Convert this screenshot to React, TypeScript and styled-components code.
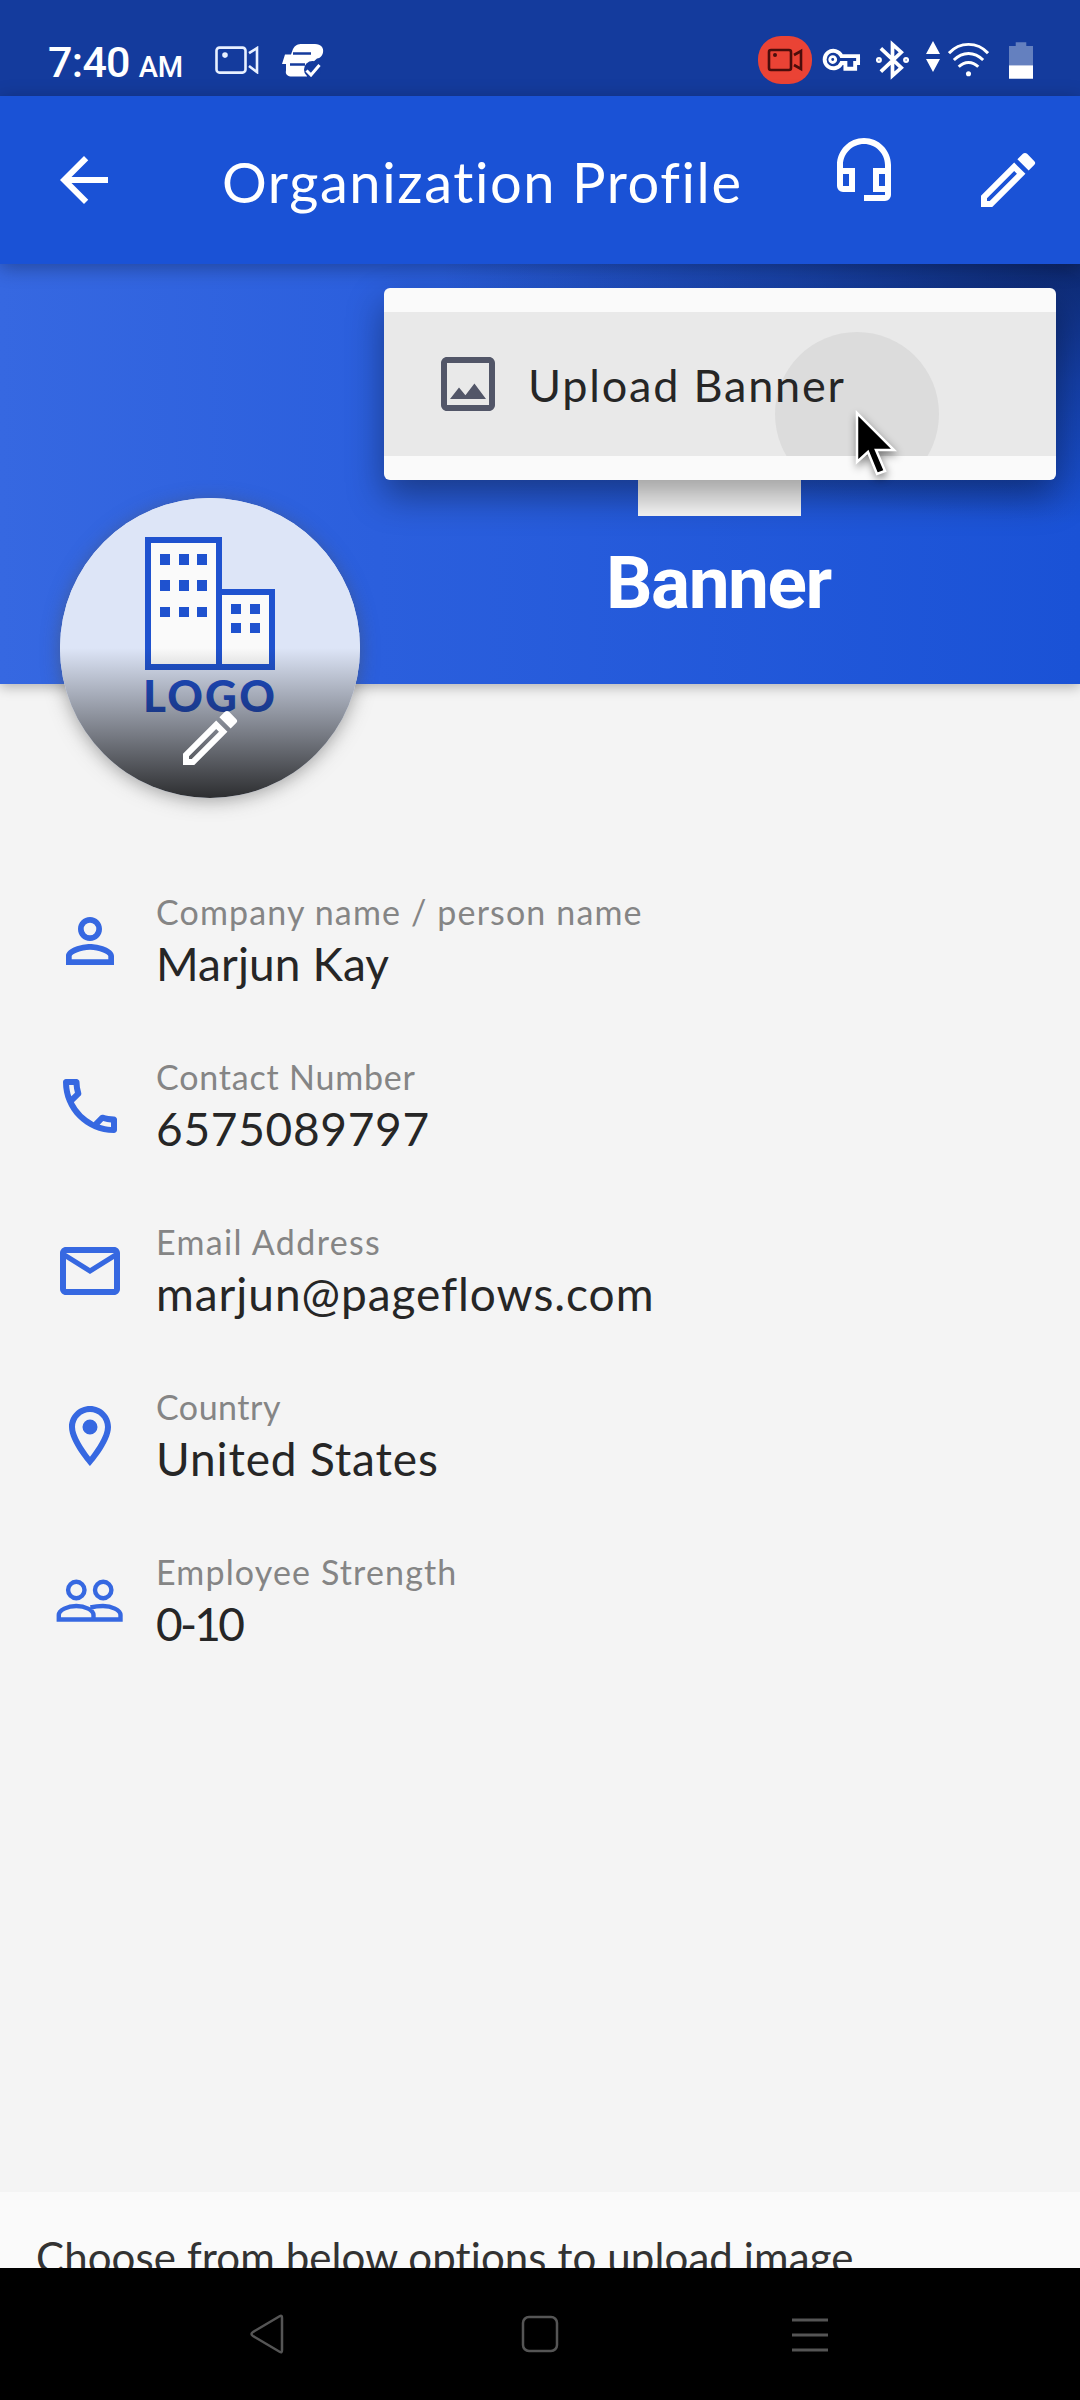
import React from "react";
import styled, { createGlobalStyle } from "styled-components";

const Global = createGlobalStyle`
  body { margin: 0; background: #f4f4f4; }
  * { box-sizing: border-box; }
`;

const Screen = styled.main`
  width: 1080px;
  height: 2400px;
  display: flex;
  flex-direction: column;
  overflow: hidden;
  background: #f4f4f4;
  font-family: Lato, "Open Sans", sans-serif;
`;

const StatusBar = styled.header`
  height: 96px;
  flex: none;
  display: flex;
  justify-content: space-between;
  padding: 24px 47px 0 48px;
  background: #143b9d;
  color: #fff;
`;

const StatusGroup = styled.div`
  height: 72px;
  display: flex;
  align-items: center;
`;

const Clock = styled.div`
  width: 166px;
  height: 72px;
  font: 500 43px/76px Roboto, sans-serif;
  letter-spacing: -0.7px;
  white-space: nowrap;
  small { font-size: 29px; margin-left: 9px; letter-spacing: -0.3px; }
`;

const Glyph = styled.svg<{ $gap?: number }>`
  display: block;
  flex: none;
  margin-left: ${(p) => p.$gap ?? 0}px;
`;

const AppBar = styled.nav`
  position: relative;
  z-index: 2;
  height: 168px;
  flex: none;
  display: flex;
  padding: 48px 36px 0 48px;
  background: #1a52d6;
  color: #fff;
  box-shadow: 0 4px 18px rgba(0, 0, 0, 0.3);
`;

const Title = styled.h1`
  width: 604px;
  margin: 0;
  padding-left: 102px;
  font-size: 56px;
  line-height: 72px;
  padding-top: 2px;
  font-weight: 400;
  letter-spacing: 1.6px;
  white-space: nowrap;
`;

const Support = styled.div`
  margin: -9px 72px 0 104px;
`;

const Banner = styled.section`
  position: relative;
  height: 420px;
  flex: none;
  background:
    radial-gradient(ellipse 640px 260px at 100% 0, rgba(6, 16, 50, 0.62), rgba(6, 16, 50, 0.3) 45%, rgba(6, 16, 50, 0)),
    linear-gradient(90deg, #3668e1 0%, #2b5fdd 35%, #1a52d6 100%);
  box-shadow: 0 3px 12px rgba(0, 0, 0, 0.28);
`;

const BannerMark = styled.div`
  width: 163px;
  height: 163px;
  margin: 89px 0 0 638px;
  background: #fafafa;
  position: absolute;
`;

const BannerName = styled.strong`
  position: absolute;
  left: 606px;
  top: 275px;
  color: #fff;
  font: 700 73px/88px Roboto, sans-serif;
  letter-spacing: -1.5px;
`;

const Menu = styled.div`
  position: absolute;
  z-index: 3;
  left: 384px;
  top: 24px;
  width: 672px;
  height: 192px;
  padding: 24px 0;
  border-radius: 6px;
  background: #fafafa;
  box-shadow: 0 16px 36px rgba(0, 0, 0, 0.38);
`;

const MenuItem = styled.div`
  position: relative;
  height: 144px;
  padding-left: 48px;
  display: flex;
  align-items: center;
  overflow: hidden;
  background: #e9e9e9;
  color: #525668;
`;

const Ripple = styled.i`
  position: absolute;
  left: 391px;
  top: 20px;
  width: 164px;
  height: 164px;
  border-radius: 50%;
  background: #dcdcdc;
`;

const MenuText = styled.span`
  position: relative;
  margin-left: 24px;
  font-size: 45px;
  line-height: 60px;
  padding-top: 1px;
  letter-spacing: 1.8px;
  color: #262626;
`;

const Pointer = styled.svg`
  position: absolute;
  z-index: 4;
  left: 463px;
  top: 117px;
  filter: drop-shadow(1px 4px 4px rgba(0, 0, 0, 0.45));
`;

const Avatar = styled.div`
  position: absolute;
  left: 60px;
  top: 234px;
  width: 300px;
  height: 300px;
  border-radius: 50%;
  overflow: hidden;
  background: #dde5f7;
`;

const AvatarShadow = styled(Avatar)`
  overflow: visible;
  box-shadow: 0 3px 18px rgba(80, 80, 80, 0.5);
`;

const Scrim = styled.div`
  position: absolute;
  inset: 150px 0 0;
  background: linear-gradient(180deg, rgba(0, 0, 0, 0), rgba(20, 20, 20, 0.88));
`;

const LogoWord = styled.b`
  position: absolute;
  left: 83px;
  top: 171px;
  font-size: 44px;
  line-height: 52px;
  font-weight: 900;
  letter-spacing: 2.2px;
  color: #1d4fd0;
`;

const AvatarEdit = styled.div`
  position: absolute;
  left: 114px;
  top: 204px;
  color: #fff;
`;

const Details = styled.dl`
  flex: 1;
  margin: 0;
  padding: 202px 54px 0;
`;

const Row = styled.div`
  height: 165px;
  display: flex;
`;

const RowIcon = styled.div`
  width: 102px;
  padding-top: 19px;
  color: #3668e1;
`;

const Label = styled.dt<{ $track: number }>`
  padding-top: 4px;
  font-size: 34px;
  line-height: 44px;
  color: #858585;
  letter-spacing: ${(p) => p.$track}px;
`;

const Value = styled.dd<{ $track: number }>`
  margin: 0;
  padding-top: 1px;
  font-size: 46px;
  line-height: 58px;
  color: #262626;
  letter-spacing: ${(p) => p.$track}px;
`;

const Sheet = styled.section`
  height: 76px;
  flex: none;
  padding: 35px 0 0 36px;
  overflow: hidden;
  background: #fafafa;
  color: #333;
  font-size: 42px;
  line-height: 60px;
  letter-spacing: 0.1px;
  font-variant-ligatures: none;
  white-space: nowrap;
`;

const NavBar = styled.footer`
  height: 132px;
  flex: none;
  display: grid;
  grid-template-columns: repeat(3, 270px);
  justify-content: center;
  justify-items: center;
  padding-top: 42px;
  background: #000;
`;

const Icon = ({ d, size = 72 }: { d: string; size?: number }) => (
  <Glyph width={size} height={size} viewBox="0 0 24 24" fill="currentColor">
    <path fillRule="evenodd" d={d} />
  </Glyph>
);

const paths = {
  back: "M20 11H7.83l5.59-5.59L12 4l-8 8 8 8 1.41-1.41L7.83 13H20v-2z",
  headset:
    "M12 1C7.03 1 3 5.03 3 10v7a2 2 0 0 0 2 2h4v-8H5v-1c0-3.87 3.13-7 7-7s7 3.13 7 7v1h-4v8h4v1h-7v2h7a2 2 0 0 0 2-2V10c0-4.97-4.03-9-9-9zM7 13v4H5v-4h2zm12 4h-2v-4h2v4z",
  edit: "M14.06 9.02l.92.92L5.92 19H5v-.92l9.06-9.06M17.66 3c-.25 0-.51.1-.7.29l-1.83 1.83 3.75 3.75 1.83-1.83a.996.996 0 0 0 0-1.41l-2.34-2.34c-.2-.2-.45-.29-.71-.29zm-3.6 3.19L3 17.25V21h3.75L17.81 9.94l-3.75-3.75z",
  image:
    "M19 5v14H5V5h14m0-2H5c-1.1 0-2 .9-2 2v14c0 1.1.9 2 2 2h14c1.1 0 2-.9 2-2V5c0-1.1-.9-2-2-2zM14.14 11.86l-3 3.87L9 13.14 6 17h12l-3.86-5.14z",
  person:
    "M12 5.9a2.1 2.1 0 1 1 0 4.2 2.1 2.1 0 0 1 0-4.2m0 9c2.97 0 6.1 1.46 6.1 2.1v1.1H5.9V17c0-.64 3.13-2.1 6.1-2.1M12 4C9.79 4 8 5.79 8 8s1.79 4 4 4 4-1.79 4-4-1.79-4-4-4zm0 9c-2.67 0-8 1.34-8 4v3h16v-3c0-2.66-5.33-4-8-4z",
  phone:
    "M6.54 5c.06.89.21 1.76.45 2.59l-1.2 1.2c-.41-1.2-.67-2.47-.76-3.79h1.51m9.86 12.02c.85.24 1.72.39 2.6.45v1.49c-1.32-.09-2.59-.35-3.8-.75l1.2-1.19M7.5 3H4c-.55 0-1 .45-1 1 0 9.39 7.61 17 17 17 .55 0 1-.45 1-1v-3.49c0-.55-.45-1-1-1-1.24 0-2.45-.2-3.57-.57a1.02 1.02 0 0 0-1.02.24l-2.2 2.2a15.045 15.045 0 0 1-6.59-6.59l2.2-2.2c.28-.28.36-.67.25-1.02A11.36 11.36 0 0 1 8.5 4c0-.55-.45-1-1-1z",
  mail: "M4 4C2.9 4 2 4.9 2 6v12c0 1.1.9 2 2 2h16c1.1 0 2-.9 2-2V6c0-1.1-.9-2-2-2H4zm16 14H4V8l8 5 8-5v10zm-8-7L4 6h16l-8 5z",
  pin: "M12 2C8.13 2 5 5.13 5 9c0 5.25 7 13 7 13s7-7.75 7-13c0-3.87-3.13-7-7-7zM7 9c0-2.76 2.24-5 5-5s5 2.24 5 5c0 2.88-2.88 7.19-5 9.88C9.92 16.21 7 11.85 7 9zm5-2.5a2.5 2.5 0 1 0 0 5 2.5 2.5 0 0 0 0-5z",
};

const PeopleIcon = () => (
  <Glyph width="72" height="72" viewBox="0 0 72 72" fill="none" stroke="currentColor" strokeWidth="4.4">
    <circle cx="22.3" cy="25" r="8.2" />
    <circle cx="49.2" cy="25" r="8.2" />
    <path d="M4.8 54.5v-4.5c0-5 9-9 17.5-9s17.2 4 17.2 9v4.5zM36.5 42.500c4-1 8-1.500 12.500-1.500 8.500 0 17.500 4 17.500 9v4.500H39.500" />
  </Glyph>
);

const Camera = ({ color, size, gap }: { color: string; size: number; gap?: number }) => (
  <Glyph $gap={gap} width={size} height={size * 0.64} viewBox="0 0 44 28" fill="none" stroke={color} strokeWidth="2.6">
    <rect x="1.5" y="1.5" width="29" height="25" rx="3" />
    <path d="M34 7l8-5v24l-8-6" />
    <circle cx="10" cy="9" r="1.5" fill={color} />
  </Glyph>
);

const rows = [
  { icon: <Icon d={paths.person} />, label: "Company name / person name", value: "Marjun Kay", lt: 1.15, vt: 0.1 },
  { icon: <Icon d={paths.phone} />, label: "Contact Number", value: "6575089797", lt: 0.8, vt: 0.7 },
  { icon: <Icon d={paths.mail} />, label: "Email Address", value: "marjun@pageflows.com", lt: 1.35, vt: 0.95 },
  { icon: <Icon d={paths.pin} />, label: "Country", value: "United States", lt: 0.5, vt: 0.85 },
  { icon: <PeopleIcon />, label: "Employee Strength", value: "0-10", lt: 1.15, vt: -2.7 },
];

export default function App() {
  return (
    <>
      <Global />
      <Screen>
        <StatusBar>
          <StatusGroup>
            <Clock>7:40<small>AM</small></Clock>
            <Camera color="#e8f0ff" size={44} gap={1} />
            <Glyph $gap={23} width="42" height="33" viewBox="0 0 42 33" fill="#fff">
              <path d="M11 5C13 1 16 0 20 0h13c6 0 9 4 8 8.500-1 4-3 5.500-6 6L29 20H0l3-9.500h6z" />
              <path d="M4 19h23l-2 13.500H10c-4 0-7-2-6-6z" />
              <path d="M11 9.500h18M8 20.500h15" stroke="#143b9d" strokeWidth="2.6" />
              <circle cx="30.500" cy="25.500" r="8.500" fill="#143b9d" />
              <path d="M24.500 26.500l4.500 4.500L37.500 21" fill="none" stroke="#fff" strokeWidth="3" />
            </Glyph>
          </StatusGroup>
          <StatusGroup>
            <Glyph width="54" height="48" viewBox="0 0 54 48" fill="none">
              <rect width="54" height="48" rx="23" fill="#ea4335" />
              <g stroke="#4b0d0b" strokeWidth="2.6">
                <rect x="11" y="14" width="22" height="20" rx="2" />
                <path d="M36 19l7-4v18l-7-4" />
              </g>
              <circle cx="17" cy="19" r="2" fill="#4b0d0b" />
            </Glyph>
            <Glyph $gap={10} width="39" height="24" viewBox="0 0 40 24" fill="none" stroke="#fff" strokeWidth="4">
              <path d="M20 8h17v7h-3v6H24v-6h-4a9 9 0 1 1 0-7z" />
              <circle cx="11" cy="11.5" r="3" strokeWidth="3" />
            </Glyph>
            <Glyph $gap={15} width="33" height="40" viewBox="0 0 34 40" fill="none" stroke="#fff" strokeWidth="3.8">
              <path d="M5 8l21 20-9 8V4l9 8L5 32" />
              <circle cx="3" cy="20" r="1.2" />
              <circle cx="31" cy="20" r="1.2" />
            </Glyph>
            <Glyph $gap={17} width="14" height="38" viewBox="0 0 14 38" fill="#fff">
              <path d="M0 13L7 0l7 13zM0 18h14L7 31z" />
            </Glyph>
            <Glyph $gap={8} width="41" height="36" viewBox="0 0 42 36" fill="none" stroke="#fff" strokeWidth="3">
              <path d="M1 11c11-12 29-12 40 0M6 18c9-9 21-9 30 0M11 25c6-6 14-6 20 0" />
              <circle cx="21" cy="32" r="2.6" fill="#fff" stroke="none" />
            </Glyph>
            <Glyph $gap={20} width="24" height="37" viewBox="0 0 25 38">
              <path fill="#6480bf" d="M7 0h11v4h7v20H0V4h7z" />
              <path fill="#fff" d="M0 24h25v14H0z" />
            </Glyph>
          </StatusGroup>
        </StatusBar>

        <AppBar>
          <Icon d={paths.back} />
          <Title>Organization Profile</Title>
          <Support><Icon d={paths.headset} /></Support>
          <Icon d={paths.edit} />
        </AppBar>

        <Banner>
          <BannerMark />
          <BannerName>Banner</BannerName>
          <AvatarShadow />
          <Avatar>
            <Glyph width="300" height="300" viewBox="0 0 300 300" fill="#fafafa" stroke="#1f52cf" strokeWidth="6">
              <path d="M88 42h71v127H88zM159 94h53v75h-53z" />
              <path
                stroke="none"
                fill="#1f52cf"
                d="M100 56h10v11h-10zM119 56h10v11h-10zM137 56h10v11h-10zM100 82h10v11h-10zM119 82h10v11h-10zM137 82h10v11h-10zM100 109h10v10h-10zM119 109h10v10h-10zM137 109h10v10h-10zM171 106h10v10h-10zM190 106h10v10h-10zM171 125h10v10h-10zM190 125h10v10h-10z"
              />
            </Glyph>
            <LogoWord>LOGO</LogoWord>
            <Scrim />
            <AvatarEdit><Icon d={paths.edit} /></AvatarEdit>
          </Avatar>
          <Menu>
            <MenuItem>
              <Ripple />
              <Icon d={paths.image} />
              <MenuText>Upload Banner</MenuText>
            </MenuItem>
            <Pointer width="60" height="76" viewBox="0 0 60 76">
              <path d="M10 8v49l11-10 9 22 8-3-9-21h18z" fill="#000" stroke="#fff" strokeWidth="2.5" />
            </Pointer>
          </Menu>
        </Banner>

        <Details>
          {rows.map((r) => (
            <Row key={r.label}>
              <RowIcon>{r.icon}</RowIcon>
              <div>
                <Label $track={r.lt}>{r.label}</Label>
                <Value $track={r.vt}>{r.value}</Value>
              </div>
            </Row>
          ))}
        </Details>

        <Sheet>Choose from below options to upload image</Sheet>
        <NavBar>
          <Glyph width="48" height="48" viewBox="0 0 48 48" fill="none" stroke="#555" strokeWidth="2.5">
            <path d="M34 6L7 22q-3 2 0 4l27 16q2 1 2-2V8q0-3-2-2z" />
          </Glyph>
          <Glyph width="38" height="48" viewBox="0 0 38 48" fill="none" stroke="#555" strokeWidth="2.5">
            <rect x="2" y="7" width="34" height="34" rx="6" />
          </Glyph>
          <Glyph width="36" height="48" viewBox="0 0 36 48" stroke="#555" strokeWidth="3">
            <path d="M0 10h36M0 25h36M0 40h36" />
          </Glyph>
        </NavBar>
      </Screen>
    </>
  );
}
